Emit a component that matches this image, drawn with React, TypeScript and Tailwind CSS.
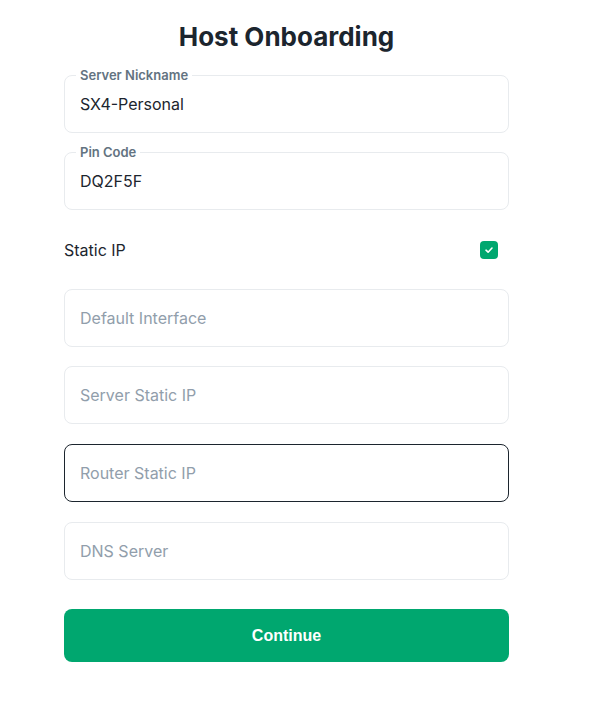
import React from "react";

const font = { fontFamily: "Inter, 'Noto Sans', sans-serif" };

function Field({
  label,
  value,
  placeholder,
  focused,
  className,
}: {
  label?: string;
  value?: string;
  placeholder?: string;
  focused?: boolean;
  className?: string;
}) {
  return (
    <div
      className={`relative h-[58px] rounded-lg border ${
        focused ? "border-[#1C252E]" : "border-[#e8ebee]"
      } ${className ?? ""}`}
    >
      {label && (
        <span className="absolute left-[11px] top-[-9px] bg-white px-[4px] text-[13px] leading-[16px] font-semibold text-[#637381]">
          {label}
        </span>
      )}
      <div className="flex h-full items-center pl-[15px]">
        {value ? (
          <span className="text-[16px] text-[#1C252E]">{value}</span>
        ) : (
          <span className="text-[16px] text-[#919EAB]">{placeholder}</span>
        )}
      </div>
    </div>
  );
}

export default function App() {
  return (
    <div className="min-h-[704px] w-[597px] bg-white" style={font}>
      <div className="ml-[64px] w-[445px] pt-[18px]">
        <h1 className="text-center text-[26px] leading-[38px] font-bold text-[#1C252E]">
          Host Onboarding
        </h1>
        <Field className="mt-[19px]" label="Server Nickname" value="SX4-Personal" />
        <Field className="mt-[19px]" label="Pin Code" value="DQ2F5F" />
        <div className="mt-[20px] flex h-[40px] items-center justify-between">
          <span className="text-[16px] text-[#1C252E]">Static IP</span>
          <div className="mr-[11px] flex h-[18px] w-[18px] items-center justify-center rounded-[4px] bg-[#00A76F]">
            <svg width="10" height="10" viewBox="0 0 10 10">
              <path
                d="M2 5.2 L4.1 7.2 L8 3"
                fill="none"
                stroke="white"
                strokeWidth="1.6"
                strokeLinecap="round"
                strokeLinejoin="round"
              />
            </svg>
          </div>
        </div>
        <Field className="mt-[19px]" placeholder="Default Interface" />
        <Field className="mt-[19px]" placeholder="Server Static IP" />
        <Field className="mt-[20px]" placeholder="Router Static IP" focused />
        <Field className="mt-[20px]" placeholder="DNS Server" />
        <button
          className="mt-[29px] flex h-[53px] w-full items-center justify-center rounded-lg bg-[#00A76F] text-[16px] font-bold text-white"
          style={{ fontFamily: "'Liberation Sans', Arial, sans-serif" }}
        >
          Continue
        </button>
      </div>
    </div>
  );
}
